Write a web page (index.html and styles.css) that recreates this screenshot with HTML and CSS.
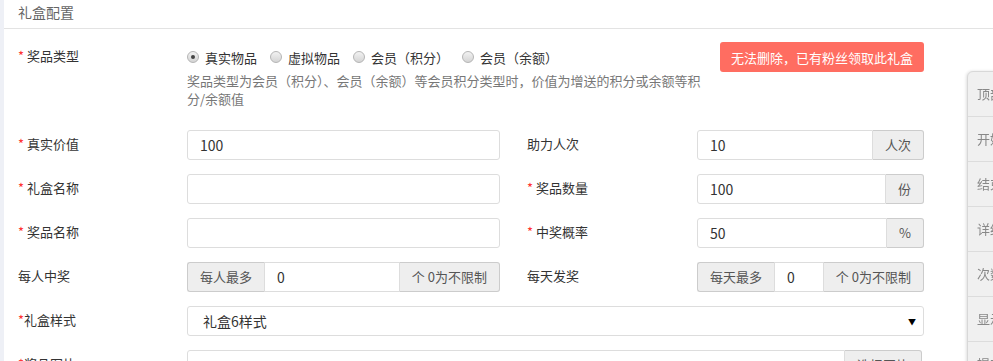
FILE: index.html
```html
<!doctype html>
<html lang="zh-CN">
<head>
  <meta charset="utf-8">
  <title>礼盒配置</title>
  <link rel="stylesheet" href="styles.css">
</head>
<body>
  <div class="layout">
    <div class="side-strip"></div>
    <div class="panel">
      <div class="panel-title">礼盒配置</div>

      <div class="form">
        <div class="row-type">
          <div class="field-label"><span class="req">*</span> 奖品类型</div>
          <div class="type-body">
            <div class="radios">
              <label class="radio"><span class="dot checked"></span>真实物品</label>
              <label class="radio"><span class="dot"></span>虚拟物品</label>
              <label class="radio"><span class="dot"></span>会员（积分）</label>
              <label class="radio"><span class="dot"></span>会员（余额）</label>
            </div>
            <p class="help">奖品类型为会员（积分）、会员（余额）等会员积分类型时，价值为增送的积分或余额等积分/余额值</p>
          </div>
          <button class="btn-danger" type="button">无法删除，已有粉丝领取此礼盒</button>
        </div>

        <div class="row">
          <div class="field-label"><span class="req">*</span> 真实价值</div>
          <input class="text-input" type="text" value="100">
          <div class="field-label second">助力人次</div>
          <div class="input-group">
            <input class="text-input" type="text" value="10">
            <span class="addon">人次</span>
          </div>
        </div>

        <div class="row">
          <div class="field-label"><span class="req">*</span> 礼盒名称</div>
          <input class="text-input" type="text" value="">
          <div class="field-label second"><span class="req">*</span> 奖品数量</div>
          <div class="input-group">
            <input class="text-input" type="text" value="100">
            <span class="addon">份</span>
          </div>
        </div>

        <div class="row">
          <div class="field-label"><span class="req">*</span> 奖品名称</div>
          <input class="text-input" type="text" value="">
          <div class="field-label second"><span class="req">*</span> 中奖概率</div>
          <div class="input-group">
            <input class="text-input" type="text" value="50">
            <span class="addon">%</span>
          </div>
        </div>

        <div class="row">
          <div class="field-label">每人中奖</div>
          <div class="input-group">
            <span class="addon">每人最多</span>
            <input class="text-input" type="text" value="0">
            <span class="addon">个 0为不限制</span>
          </div>
          <div class="field-label second">每天发奖</div>
          <div class="input-group">
            <span class="addon">每天最多</span>
            <input class="text-input" type="text" value="0">
            <span class="addon">个 0为不限制</span>
          </div>
        </div>

        <div class="row row-wide">
          <div class="field-label"><span class="req">*</span>礼盒样式</div>
          <div class="select">
            <span>礼盒6样式</span>
            <span class="caret">▼</span>
          </div>
        </div>

        <div class="row row-wide">
          <div class="field-label"><span class="req">*</span>奖品图片</div>
          <div class="input-group image-group">
            <input class="text-input" type="text" value="">
            <span class="addon">选择图片</span>
          </div>
        </div>
      </div>
    </div>
  </div>

  <nav class="float-nav">
    <a>顶部</a>
    <a>开始时间</a>
    <a>结束时间</a>
    <a>详细说明</a>
    <a>次数设置</a>
    <a>显示设置</a>
    <a>提交保存</a>
  </nav>
</body>
</html>
```

FILE: styles.css
```css
* {
  margin: 0;
  padding: 0;
  box-sizing: border-box;
}

body {
  font-family: "Noto Sans CJK SC", "Noto Sans", sans-serif;
  font-size: 13px;
  color: #333;
  background: #fff;
  width: 993px;
  height: 361px;
  overflow: hidden;
}

.layout {
  display: flex;
  min-height: 361px;
}

.side-strip {
  width: 4px;
  background-color: #eef0f6;
}

.panel {
  flex: 1;
}

.panel-title {
  height: 29px;
  line-height: 24px;
  padding-left: 14px;
  font-size: 14px;
  color: #666;
  border-bottom: 1px solid #e3e3e3;
}

.form {
  width: 920px;
  padding: 13px 0 0 14px;
}

.field-label {
  line-height: 28px;
  color: #333;
}

.field-label.second {
  padding-left: 27px;
}

.req {
  color: #f33;
}

/* prize type row */
.row-type {
  display: flex;
  align-items: flex-start;
  margin-bottom: 22px;
}

.row-type .field-label {
  width: 169px;
  flex: none;
}

.type-body {
  width: 530px;
}

.radios {
  display: flex;
  align-items: center;
  height: 30px;
}

.radio {
  display: flex;
  align-items: center;
  margin-right: 13px;
  color: #333;
}

.dot {
  width: 12px;
  height: 12px;
  margin-right: 6px;
  border-radius: 50%;
  border: 1px solid #b5b5b5;
  background: linear-gradient(180deg, #f2f2f2 0%, #d4d4d4 100%);
  position: relative;
}

.dot.checked::after {
  content: "";
  position: absolute;
  left: 3px;
  top: 3px;
  width: 4px;
  height: 4px;
  border-radius: 50%;
  background-color: #444;
}

.help {
  color: #777;
  line-height: 18px;
}

.btn-danger {
  margin-left: auto;
  height: 30px;
  padding: 0 11px;
  border: none;
  border-radius: 3px;
  background-color: #ff6d61;
  color: #fff;
  font-family: inherit;
  font-size: 13px;
}

/* normal rows */
.row {
  display: grid;
  grid-template-columns: 169px 313px 197px 227px;
  height: 30px;
  margin-bottom: 14px;
}

.row-wide {
  grid-template-columns: 169px 737px;
}

.text-input {
  width: 100%;
  height: 30px;
  padding: 0 12px;
  border: 1px solid #ddd;
  border-radius: 3px;
  font-family: inherit;
  font-size: 14px;
  color: #333;
  outline: none;
}

.input-group {
  display: flex;
  height: 30px;
}

.input-group .text-input {
  flex: 1;
  min-width: 0;
  border-radius: 0;
}

.input-group .text-input:first-child {
  border-radius: 3px 0 0 3px;
}

.addon {
  flex: none;
  padding: 0 12px;
  line-height: 28px;
  background-color: #eee;
  border: 1px solid #ccc;
  color: #555;
  white-space: nowrap;
}

.addon:first-child {
  border-radius: 3px 0 0 3px;
  border-right: none;
}

.addon:last-child {
  border-radius: 0 3px 3px 0;
  border-left: none;
}

.image-group {
  width: 735px;
}

.select {
  display: flex;
  align-items: center;
  justify-content: space-between;
  height: 30px;
  padding: 0 7px 0 15px;
  border: 1px solid #ddd;
  border-radius: 3px;
  font-size: 14px;
  color: #333;
}

.caret {
  font-size: 8px;
  color: #000;
}

/* floating side navigation */
.float-nav {
  position: fixed;
  left: 967px;
  top: 71px;
  width: 60px;
  background-color: #f0f0f0;
  border: 1px solid #d8d8d8;
  border-top-left-radius: 6px;
  box-shadow: -1px 0 3px rgba(0, 0, 0, 0.12);
}

.float-nav a {
  display: block;
  height: 45px;
  line-height: 44px;
  padding-left: 9px;
  border-bottom: 1px solid #dcdcdc;
  color: #888;
  font-size: 13px;
  white-space: nowrap;
}
```
